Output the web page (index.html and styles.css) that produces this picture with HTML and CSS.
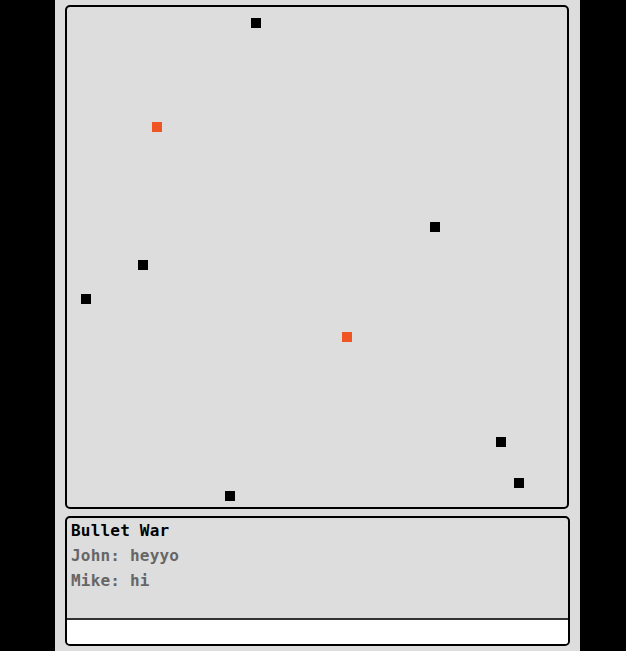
FILE: index.html
```html
<!DOCTYPE html>
<html>
<head>
<meta charset="utf-8">
<link rel="stylesheet" href="styles.css">
</head>
<body>
<div class="column">
  <div class="game">
    <div class="field">
      <div class="dot black" style="left:184px;top:11px"></div>
      <div class="dot orange" style="left:85px;top:115px"></div>
      <div class="dot black" style="left:363px;top:215px"></div>
      <div class="dot black" style="left:71px;top:253px"></div>
      <div class="dot black" style="left:14px;top:287px"></div>
      <div class="dot orange" style="left:275px;top:325px"></div>
      <div class="dot black" style="left:429px;top:430px"></div>
      <div class="dot black" style="left:447px;top:471px"></div>
      <div class="dot black" style="left:158px;top:484px"></div>
    </div>
  </div>
  <div class="chat">
    <div class="messages">
      <div class="line title">Bullet War</div>
      <div class="line msg">John: heyyo</div>
      <div class="line msg">Mike: hi</div>
    </div>
    <input class="entry" type="text">
  </div>
</div>
</body>
</html>
```
FILE: styles.css
```css
html, body {
  margin: 0;
  padding: 0;
  background: #000;
  height: 100%;
}
.column {
  margin-left: 55px;
  width: 525px;
  height: 651px;
  box-sizing: border-box;
  background: #dddddd;
  padding: 5px 11px 0 10px;
  display: flex;
  flex-direction: column;
  gap: 7px;
}
.game {
  width: 504px;
  height: 504px;
  box-sizing: border-box;
  border: 2px solid #000;
  border-radius: 5px;
  background: #dddddd;
}
.field {
  position: relative;
  width: 500px;
  height: 500px;
}
.dot {
  position: absolute;
  width: 10px;
  height: 10px;
}
.black { background: #000; }
.orange { background: #ee5522; }
.chat {
  width: 505px;
  height: 130px;
  box-sizing: border-box;
  border: 2px solid #000;
  border-radius: 5px;
  background: #dddddd;
  display: flex;
  flex-direction: column;
  overflow: hidden;
}
.messages {
  height: 100px;
  padding: 0 4px;
  font-family: "DejaVu Sans Mono", "Liberation Mono", monospace;
  font-weight: bold;
  font-size: 16px;
  letter-spacing: 0.2px;
}
.line {
  line-height: 25px;
}
.title { color: #000; }
.msg { color: #666; }
.entry {
  display: block;
  margin: 0;
  height: 26px;
  box-sizing: border-box;
  border: none;
  border-top: 2px solid #333;
  background: #fff;
  outline: none;
  padding: 0 4px;
}
```
